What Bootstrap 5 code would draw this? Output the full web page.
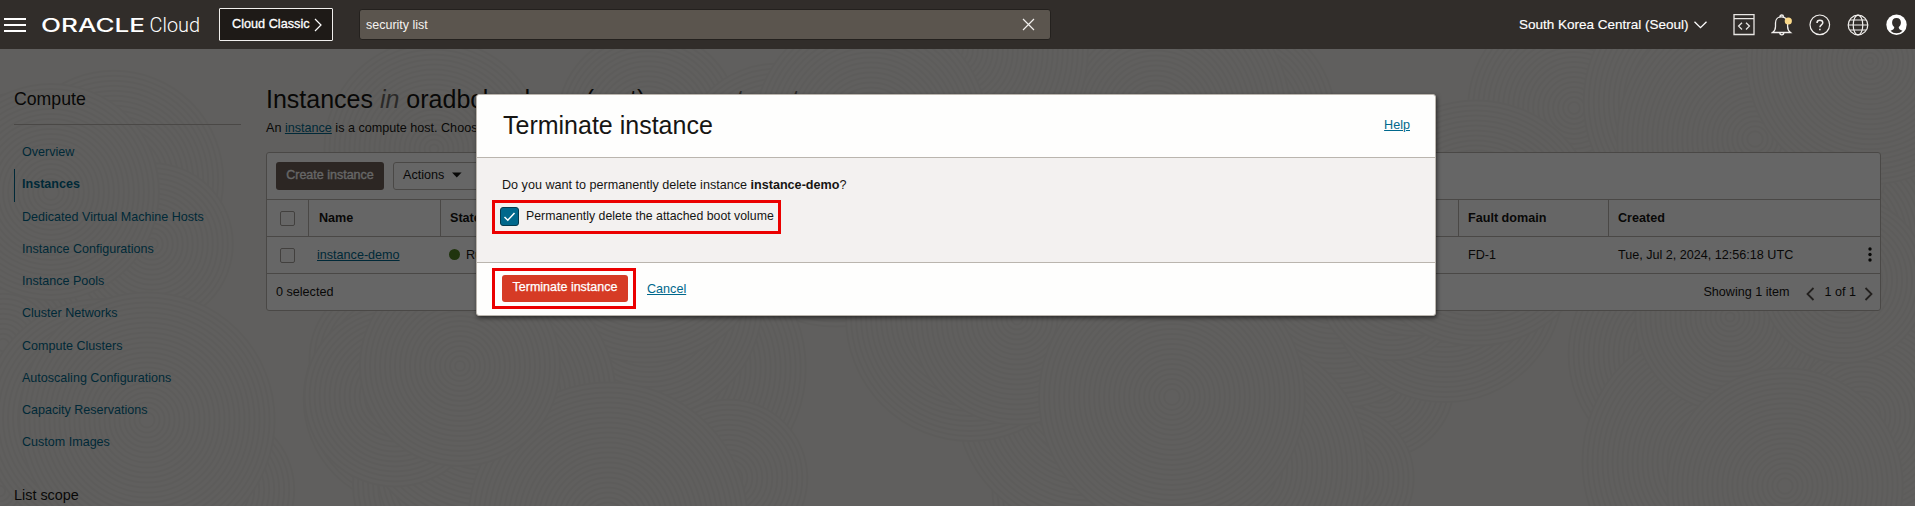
<!DOCTYPE html>
<html lang="en">
<head>
<meta charset="utf-8">
<title>Instances</title>
<meta name="viewport" content="width=device-width, initial-scale=1">
<link href="https://cdn.jsdelivr.net/npm/bootstrap@5.3.0/dist/css/bootstrap.min.css" rel="stylesheet">
<style>
:root{--line:#bab5b0;--ink:#161513;--lnk:#00688c}
body{font-family:"Liberation Sans",Arial,sans-serif;font-size:12.6px;line-height:18px;color:var(--ink);background:#f0eeea;height:506px;overflow:hidden}
svg{display:block;flex:none}
.lnk{color:var(--lnk)}
.topbar{height:49px;background:#312d2a;color:#fff;position:relative;z-index:1060;padding:0 8px 0 4px}
.menu-btn{margin-right:15px}
.brand-logo{width:162px;height:22px}
.classic-btn{width:114px;height:33px;margin-left:16px;background:#1e1a17;border:1px solid #f1efed;border-radius:1px;color:#fff;padding:0 0 2px 12px;font-size:12.7px;-webkit-text-stroke:.3px #fff}
.classic-btn svg{margin:3px 0 0 4px}
.search-box{width:692px;height:31px;margin-left:26px;background:#5b554e;border:1px solid #24211e;border-radius:3px;color:#f5f3f0;padding:0 15px 0 6px;font-size:12.5px}
.region{margin-left:auto;font-size:13.5px;-webkit-text-stroke:.15px #fff;width:188px}
.top-icons{gap:16px;margin-left:26px}
.shade{position:absolute;inset:49px 0 0 0;background:#000;opacity:.6;z-index:1040}
.rings{position:absolute;left:0;top:49px;z-index:0}
.shell{position:relative}
.side{width:227px;margin-left:14px;margin-right:25px;padding-top:38px;flex:none}
.side h2{font-size:17.7px;line-height:24px;margin:0;padding-bottom:13px;border-bottom:1px solid var(--line);font-weight:400}
.side .nav{padding-top:12px}
.side .nav-link{padding:6px 0 8px 8px;height:32.28px;color:var(--lnk);font-size:12.55px}
.side .nav-link.active{font-weight:700;border-left:1px solid var(--lnk);padding-left:7px}
.side h3{font-size:14.4px;line-height:18px;margin:26px 0 0;font-weight:400}
.content-area{width:1615px;flex:none;padding-top:34px}
.content-area h1{font-size:25px;line-height:32px;margin:0 0 4px;font-weight:400}
.content-area h1 i{color:#6b6865}
.grid-panel{margin-top:15px;background:#fff;border:1px solid var(--line);border-radius:3px}
.tools{height:46px;padding-left:9px;gap:9px}
.create-btn{width:108px;height:28px;background:#6e5f58;color:#fff;border-radius:3px;padding:0 0 2px;font-size:12.5px;line-height:1;-webkit-text-stroke:.3px #fff}
.act-btn{width:90px;height:28px;border:1px solid var(--line);border-radius:3px;padding:0 0 2px 9px}
.trow{height:37px;border-top:1px solid var(--line)}
.trow>div{display:flex;align-items:center;height:100%;padding-left:9px;padding-bottom:1px;flex:none}
.thead-row>div+div{border-left:1px solid var(--line)}
.thead-row{font-weight:700}
.trow>.w-check{width:41px;padding-left:13px}.w-name{width:132px}.w-state{width:1018px}.w-fault{width:150px}.w-created{width:272px}
.box{width:15px;height:15px;border:1px solid #a5a09b;border-radius:2px;margin-top:2px}
.dot{width:11px;height:11px;border-radius:50%;background:#508223;margin-right:6px}
.dlg{position:absolute;left:476px;top:94px;width:960px;height:222px;background:#fefefd;border:1px solid #bab5ae;border-radius:3px;box-shadow:1px 2px 4px rgba(0,0,0,.55);z-index:1055}
.dlg-head{height:63px;padding:0 25px 2px 26px;border-bottom:1px solid #bab5ae}
.dlg-head h2{font-size:25px;margin:0;line-height:32px;font-weight:400}
.dlg-body{height:105px;background:#f3f1f0;border-bottom:1px solid #bab5ae;padding:18px 0 0 15px}
.dlg-body p{margin:0 0 5px 10px;line-height:19px}
.hilite{border:3px solid #eb0000}
.chk{width:289px;height:34px;padding:0 0 2px 5px;font-size:12.32px}
.tick{width:19px;height:19px;background:#00688c;border:1px solid #053a4e;border-radius:3px;margin-right:7px}
.go{width:144px;height:41px;margin-left:15px;padding-left:2px}
.go .btn{width:126px;height:27px;background:#d63b25;color:#fff;border-radius:3px;font-size:12.5px;line-height:1;-webkit-text-stroke:.25px #fff;padding:0 0 2px;border:0}
</style>
</head>
<body>
<header class="topbar d-flex align-items-center">
  <svg class="menu-btn" width="22" height="14" viewBox="0 0 22 14" fill="#fff"><path d="M0 0h22v2H0zM0 6h22v2H0zM0 12h22v2H0z"/></svg>
  <svg class="brand-logo" viewBox="0 0 162 22" fill="#fff"><text x="0" y="18.2" font-family="Inter, sans-serif" font-size="18.2" font-weight="500" textLength="104" lengthAdjust="spacingAndGlyphs">ORACLE</text><text x="108.5" y="18.2" font-family="Roboto, sans-serif" font-weight="300" font-size="20" textLength="50.5" lengthAdjust="spacingAndGlyphs">Cloud</text></svg>
  <button class="classic-btn d-flex align-items-center" type="button">Cloud Classic<svg width="8" height="14" viewBox="0 0 8 14" fill="none" stroke="#fff" stroke-width="1.2"><path d="M1 1l6 6-6 6"/></svg></button>
  <div class="search-box d-flex align-items-center justify-content-between"><span>security list</span><svg width="13" height="13" viewBox="0 0 13 13" stroke="#f1efed" stroke-width="1.2"><path d="M1 1l11 11M12 1L1 12"/></svg></div>
  <div class="region d-flex align-items-center justify-content-between">South Korea Central (Seoul)<svg width="13" height="8" viewBox="0 0 13 8" fill="none" stroke="#fff" stroke-width="1.3"><path d="M.5 .7l6 6 6-6"/></svg></div>
  <div class="top-icons d-flex align-items-center">
    <svg width="22" height="22" viewBox="0 0 22 22" fill="none" stroke="#e8e6e3" stroke-width="1.3"><path d="M1 .5h20v20H1zM1 4.700h20M9 8.700L5.600 12.100 9 15.500M13 8.700l3.400 3.400L13 15.500"/></svg>
    <svg width="22" height="22" viewBox="0 0 22 22" fill="none" stroke="#f1efed" stroke-width="1.3"><path d="M1.500 18.500h18c-1.800-1.300-2.900-3.200-2.900-6V9c0-3.600-2.400-6.200-6-6.200S4.500 5.400 4.500 9v3.500c0 2.800-1.100 4.700-3 6zM8.900 2.800a1.800 1.800 0 0 1 3.600 0M8.800 18.800a2 2 0 0 0 4 0"/><circle cx="17.300" cy="7" r="3.600" fill="#fbd98a" stroke="none"/></svg>
    <svg width="22" height="22" viewBox="0 0 22 22" fill="none" stroke="#f1efed" stroke-width="1.2"><circle cx="10.800" cy="10.800" r="9.800"/><path d="M8 8.900C8 7.200 9.200 6.200 10.900 6.200s2.900 1 2.900 2.600c0 2-2.900 2.200-2.900 4.400M10.900 14.700v1.600" stroke-width="1.500"/></svg>
    <svg width="22" height="22" viewBox="0 0 22 22" fill="none" stroke="#f1efed" stroke-width="1.200"><circle cx="11" cy="11" r="9.800"/><ellipse cx="11" cy="11" rx="4.800" ry="9.800"/><path d="M1.200 11h19.600M3 6h16M3 16h16"/></svg>
    <svg width="22" height="22" viewBox="0 0 22 22"><circle cx="11.500" cy="10.700" r="10.200" fill="#fff"/><path d="M11.500 4c-3 0-4.400 2.100-4.400 4.600 0 2 .9 3.600 2.200 4.500-.1 2-.9 2.600-3.800 3.600 1.600 1.700 3.700 2.500 6 2.500s4.400-.8 6-2.500c-2.900-1-3.700-1.600-3.800-3.600 1.300-.9 2.200-2.500 2.200-4.500C15.900 6.100 14.500 4 11.500 4z" fill="#312d2a"/></svg>
  </div>
</header>
<svg class="rings" id="rings" width="1915" height="457" fill="#f0eeea" stroke="#e9e7e3" stroke-width="2"></svg>
<div class="shell d-flex">
  <aside class="side">
    <h2>Compute</h2>
    <nav class="nav flex-column flex-nowrap">
      <a class="nav-link" href="#">Overview</a>
      <a class="nav-link active" href="#">Instances</a>
      <a class="nav-link" href="#">Dedicated Virtual Machine Hosts</a>
      <a class="nav-link" href="#">Instance Configurations</a>
      <a class="nav-link" href="#">Instance Pools</a>
      <a class="nav-link" href="#">Cluster Networks</a>
      <a class="nav-link" href="#">Compute Clusters</a>
      <a class="nav-link" href="#">Autoscaling Configurations</a>
      <a class="nav-link" href="#">Capacity Reservations</a>
      <a class="nav-link" href="#">Custom Images</a>
    </nav>
    <h3>List scope</h3>
  </aside>
  <main class="content-area">
    <h1>Instances <i>in</i> oradbclouduser (root) <i>compartment</i></h1>
    <div>An <a class="lnk" href="#">instance</a> is a compute host. Choose</div>
    <section class="grid-panel">
      <div class="tools d-flex align-items-center">
        <button class="btn create-btn" type="button">Create instance</button>
        <div class="act-btn d-flex align-items-center">Actions<svg class="ms-2" width="10" height="6" viewBox="0 0 10 6"><path d="M0 .5h9.600L4.800 5.500z" fill="#161513"/></svg></div>
      </div>
      <div class="trow thead-row d-flex"><div class="w-check"><span class="box"></span></div><div class="w-name ps-2 pe-0"><span class="ms-1" style="margin-left:2px!important">Name</span></div><div class="w-state">State</div><div class="w-fault">Fault domain</div><div class="w-created">Created</div></div>
      <div class="trow d-flex"><div class="w-check"><span class="box"></span></div><div class="w-name"><a class="lnk ms-0 ps-0" href="#">instance-demo</a></div><div class="w-state"><span class="dot"></span>Running</div><div class="w-fault ps-2"><span class="ps-1" style="margin-left:-2px">FD-1</span></div><div class="w-created justify-content-between" style="padding-left:10px">Tue, Jul 2, 2024, 12:56:18 UTC<svg width="4" height="16" viewBox="0 0 4 16" fill="#161513" style="margin-right:8px"><circle cx="2" cy="2" r="1.700"/><circle cx="2" cy="7.500" r="1.700"/><circle cx="2" cy="13" r="1.700"/></svg></div></div>
      <div class="trow d-flex align-items-center justify-content-between"><div>0 selected</div><div>Showing 1 item<svg style="margin:4px 9px 0 17px" width="9" height="14" viewBox="0 0 9 14" fill="none" stroke="#55504b" stroke-width="1.800"><path d="M7.500 1l-6 6 6 6"/></svg>1 of 1<svg style="margin:4px 7px 0 8px" width="9" height="14" viewBox="0 0 9 14" fill="none" stroke="#55504b" stroke-width="1.800"><path d="M1.500 1l6 6-6 6"/></svg></div></div>
    </section>
  </main>
</div>
<div class="shade"></div>
<div class="dlg" role="dialog">
  <div class="dlg-head d-flex align-items-center justify-content-between"><h2>Terminate instance</h2><a class="lnk" href="#">Help</a></div>
  <div class="dlg-body">
    <p>Do you want to permanently delete instance <b>instance-demo</b>?</p>
    <div class="hilite chk d-flex align-items-center"><span class="tick"><svg width="17" height="17" viewBox="0 0 17 17" fill="none" stroke="#fff" stroke-width="1.500"><path d="M3.500 9l3.300 3.200L13.500 5"/></svg></span>Permanently delete the attached boot volume</div>
  </div>
  <div class="d-flex align-items-center" style="padding-top:5px">
    <div class="hilite go d-flex align-items-center justify-content-center"><button class="btn" type="button">Terminate instance</button></div>
    <a class="lnk" style="margin-left:11px" href="#">Cancel</a>
  </div>
</div>
<script src="https://cdn.jsdelivr.net/npm/bootstrap@5.3.0/dist/js/bootstrap.bundle.min.js"></script>
<script>
// Overlapping sets of concentric rings behind the page
const host = document.getElementById('rings');
let seed = 7, out = '';
const rnd = () => (seed = (seed * 16807) % 2147483647) / 2147483647;
for (let i = 0; i < 70; i++) {
  const x = (rnd() * 1950).toFixed(0), y = (rnd() * 480).toFixed(0), top = 70 + rnd() * 70;
  for (let r = top; r > 3; r -= 5) out += `<circle cx="${x}" cy="${y}" r="${r.toFixed(1)}"/>`;
}
host.innerHTML = out;
</script>
</body>
</html>
